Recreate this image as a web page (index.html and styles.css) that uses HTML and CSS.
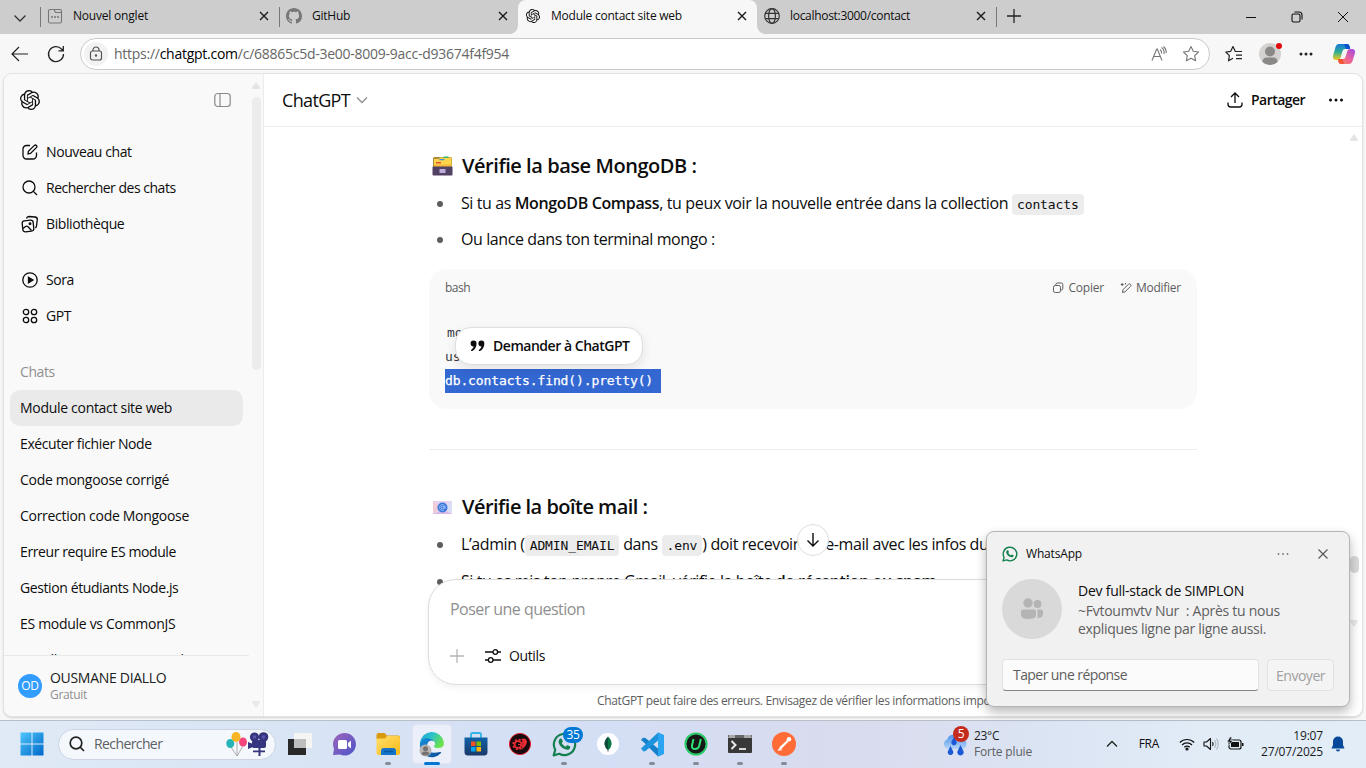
FILE: index.html
```html
<!DOCTYPE html>
<html lang="fr">
<head>
<meta charset="utf-8">
<title>Module contact site web</title>
<link rel="stylesheet" href="styles.css">
</head>
<body>
<svg width="0" height="0" class="defs">
  <defs>
    <symbol id="openai" viewBox="0 0 24 24"><path d="M22.2819 9.8211a5.9847 5.9847 0 0 0-.5157-4.9108 6.0462 6.0462 0 0 0-6.5098-2.9A6.0651 6.0651 0 0 0 4.9807 4.1818a5.9847 5.9847 0 0 0-3.9977 2.9 6.0462 6.0462 0 0 0 .7427 7.0966 5.98 5.98 0 0 0 .511 4.9107 6.051 6.051 0 0 0 6.5146 2.9001A5.9847 5.9847 0 0 0 13.2599 24a6.0557 6.0557 0 0 0 5.7718-4.2058 5.9894 5.9894 0 0 0 3.9977-2.9001 6.0557 6.0557 0 0 0-.7475-7.0729zm-9.022 12.6081a4.4755 4.4755 0 0 1-2.8764-1.0408l.1419-.0804 4.7783-2.7582a.7948.7948 0 0 0 .3927-.6813v-6.7369l2.02 1.1686a.071.071 0 0 1 .038.052v5.5826a4.504 4.504 0 0 1-4.4945 4.4944zm-9.6607-4.1254a4.4708 4.4708 0 0 1-.5346-3.0137l.142.0852 4.783 2.7582a.7712.7712 0 0 0 .7806 0l5.8428-3.3685v2.3324a.0804.0804 0 0 1-.0332.0615L9.74 19.9502a4.4992 4.4992 0 0 1-6.1408-1.6464zM2.3408 7.8956a4.485 4.485 0 0 1 2.3655-1.9728V11.6a.7664.7664 0 0 0 .3879.6765l5.8144 3.3543-2.0201 1.1685a.0757.0757 0 0 1-.071 0l-4.8303-2.7865A4.504 4.504 0 0 1 2.3408 7.872zm16.5963 3.8558L13.1038 8.364 15.1192 7.2a.0757.0757 0 0 1 .071 0l4.8303 2.7913a4.4944 4.4944 0 0 1-.6765 8.1042v-5.6772a.79.79 0 0 0-.407-.667zm2.0107-3.0231l-.142-.0852-4.7735-2.7818a.7759.7759 0 0 0-.7854 0L9.409 9.2297V6.8974a.0662.0662 0 0 1 .0284-.0615l4.8303-2.7866a4.4992 4.4992 0 0 1 6.6802 4.66zM8.3065 12.863l-2.02-1.1638a.0804.0804 0 0 1-.038-.0567V6.0742a4.4992 4.4992 0 0 1 7.3757-3.4537l-.142.0805L8.704 5.459a.7948.7948 0 0 0-.3927.6813zm1.0976-2.3654l2.602-1.4998 2.6069 1.4998v2.9994l-2.5974 1.4997-2.6067-1.4997Z" fill="currentColor"/></symbol>
    <symbol id="close" viewBox="0 0 16 16"><path d="M4 4l8 8M12 4l-8 8" fill="none" stroke="#1a1a1a" stroke-width="1.4"/></symbol>
    <symbol id="whatsapp" viewBox="0 0 24 24"><path d="M1.6 22.4l1.5-5.4A10.2 10.2 0 1 1 7 20.9z" fill="none" stroke="#15804f" stroke-width="2.1" stroke-linejoin="round"/><path d="M8.2 6.3c.5-.2 1.100 0 1.300.5l.8 1.900c.1.400 0 .7-.2 1l-.7.800c.8 1.600 2 2.700 3.800 3.600l1-1.100c.3-.3.600-.4 1-.2l1.800.900c.5.200.6.600.5 1.100-.3 1.500-1.700 2.300-3 2.200-4.200-.5-7.500-3.700-8.200-7.300-.1-1.400.7-2.900 1.900-3.400z" fill="#15804f"/></symbol>
    <linearGradient id="win" x1="0" y1="0" x2="1" y2="1"><stop offset="0" stop-color="#4cc6fb"/><stop offset="1" stop-color="#0067c9"/></linearGradient>
    <linearGradient id="chatg" x1="0" y1="0" x2="1" y2="1"><stop offset="0" stop-color="#a063ba"/><stop offset="1" stop-color="#4a55c9"/></linearGradient>
    <linearGradient id="fold" x1="0" y1="0" x2="1" y2="1"><stop offset="0" stop-color="#ffdf6a"/><stop offset="1" stop-color="#fbb918"/></linearGradient>
    <linearGradient id="edge1" x1="0" y1="0" x2="1" y2=".5"><stop offset="0" stop-color="#1a9fd9"/><stop offset=".5" stop-color="#2cc3c9"/><stop offset="1" stop-color="#6be34c"/></linearGradient>
    <linearGradient id="edge2" x1="0" y1="0" x2="1" y2="1"><stop offset="0" stop-color="#1690df"/><stop offset="1" stop-color="#0b4c94"/></linearGradient>
    <linearGradient id="store" x1="0" y1="0" x2="0" y2="1"><stop offset="0" stop-color="#0f62a8"/><stop offset="1" stop-color="#1b3868"/></linearGradient>
    <linearGradient id="cop1" x1="0" y1="0" x2="0" y2="1"><stop offset="0" stop-color="#1677e0"/><stop offset=".5" stop-color="#30ae92"/><stop offset="1" stop-color="#f4cc1c"/></linearGradient>
    <linearGradient id="cop2" x1="1" y1="0" x2="0" y2="1"><stop offset="0" stop-color="#a14ae8"/><stop offset=".55" stop-color="#ef6695"/><stop offset="1" stop-color="#fb8a4b"/></linearGradient>
    <linearGradient id="cloud" x1="0" y1="0" x2="0" y2="1"><stop offset="0" stop-color="#4d90e8"/><stop offset="1" stop-color="#b5d5fa"/></linearGradient>
  </defs>
</svg>

<header class="tabstrip">
  <div class="tab-menu"><svg width="14" height="14"><path d="M1.500 4.500l5.500 5.500 5.500-5.500" fill="none" stroke="#333" stroke-width="1.300"/></svg></div>
  <div class="tab first">
    <svg width="16" height="16" fill="none" stroke="#777" stroke-width="1.100"><path d="M1.500 4v9.500a1.500 1.500 0 0 0 1.500 1.500h10a1.500 1.500 0 0 0 1.500-1.500V4.500H8.500L7 1.500H3A1.500 1.500 0 0 0 1.500 3zM7 1.500h6a1.500 1.500 0 0 1 1.500 1.500v1.500"/><path d="M4 9h2M7 9h2M10 9h2" stroke-width="1.600"/></svg>
    <span class="t1">Nouvel onglet</span><svg class="x" width="16" height="16"><use href="#close"/></svg>
  </div>
  <div class="tab sep">
    <svg width="16" height="16" viewBox="0 0 16 16"><path fill="#777" d="M8 0C3.58 0 0 3.58 0 8c0 3.54 2.290 6.530 5.470 7.590.4.070.550-.170.550-.380 0-.190-.010-.820-.010-1.490-2.010.370-2.530-.490-2.690-.940-.090-.230-.480-.940-.820-1.130-.280-.150-.680-.520-.010-.530.630-.010 1.080.580 1.230.820.720 1.210 1.870.870 2.330.660.070-.520.280-.870.510-1.070-1.780-.2-3.640-.890-3.640-3.950 0-.870.310-1.590.820-2.150-.080-.2-.360-1.020.080-2.120 0 0 .670-.210 2.200.820.640-.180 1.320-.270 2-.270s1.360.090 2 .270c1.530-1.040 2.200-.820 2.200-.820.440 1.100.160 1.920.080 2.120.510.560.820 1.270.820 2.150 0 3.070-1.870 3.750-3.650 3.950.290.250.540.730.540 1.480 0 1.070-.010 1.930-.010 2.200 0 .210.150.460.550.380A8.010 8.010 0 0 0 16 8c0-4.420-3.580-8-8-8z"/></svg>
    <span class="t2">GitHub</span><svg class="x" width="16" height="16"><use href="#close"/></svg>
  </div>
  <div class="tab active">
    <svg width="16" height="16" class="ai"><use href="#openai"/></svg>
    <span class="t3">Module contact site web</span><svg class="x" width="16" height="16"><use href="#close"/></svg>
  </div>
  <div class="tab">
    <svg width="16" height="16" fill="none" stroke="#333" stroke-width="1.200"><circle cx="8" cy="8" r="7.300"/><ellipse cx="8" cy="8" rx="3.400" ry="7.300"/><path d="M1.500 5.300h13M1.500 10.700h13"/></svg>
    <span class="t4">localhost:3000/contact</span><svg class="x" width="16" height="16"><use href="#close"/></svg>
  </div>
  <div class="tab-new"><svg width="14" height="14"><path d="M7 0v14M0 7h14" stroke="#222" stroke-width="1.300"/></svg></div>
  <div class="win-btns">
    <svg width="12" height="12"><path d="M1 6.500h10" stroke="#111"/></svg>
    <svg width="12" height="12" fill="none" stroke="#111" stroke-width="1.100"><rect x="1" y="3" width="8" height="8" rx="1.500"/><path d="M3.500 1h4.500a3 3 0 0 1 3 3v4.500"/></svg>
    <svg width="12" height="12"><path d="M1 1l10 10M11 1L1 11" stroke="#111"/></svg>
  </div>
</header>

<div class="toolbar">
  <svg class="back" width="18" height="16" fill="none" stroke="#222" stroke-width="1.200"><path d="M17 8H1M8 1L1 8l7 7"/></svg>
  <svg class="reload" width="18" height="18" fill="none" stroke="#222" stroke-width="1.300"><path d="M16.500 9A7.500 7.500 0 1 1 14.500 4L16 5.500M16.300 1v4.800h-4.800"/></svg>
  <div class="omnibox">
    <div class="lock"><svg width="14" height="16" fill="none" stroke="#555" stroke-width="1.200"><rect x="1.500" y="5" width="11" height="9" rx="2"/><path d="M4 5V4a3 3 0 0 1 6 0v1"/><circle cx="7" cy="9.500" r=".6" fill="#555"/></svg></div>
    <div class="url">https://<b>chatgpt.com</b>/c/68865c5d-3e00-8009-9acc-d93674f4f954</div>
    <svg width="16" height="16" fill="none" stroke="#777" stroke-width="1.100"><path d="M1 14.500L5.700 3h.6L11 14.500M2.800 10.500h6.500M9 3.500q2 1.500 1.500 4M10.500 1.500q3.300 2.200 2.500 6.500M12.500.5q3 2.500 2.700 6.500"/></svg>
    <svg width="18" height="18" fill="none" stroke="#777" stroke-width="1.100"><path d="M9 1.500l2.300 4.800 5.200.7-3.800 3.600.9 5.200L9 13.300l-4.600 2.500.9-5.200L1.500 7l5.200-.7z" stroke-linejoin="round"/></svg>
  </div>
  <div class="tools">
    <svg width="18" height="18" fill="none" stroke="#222" stroke-width="1.200"><path d="M17 6.500H10.300L8 1.500 5.700 6.300.8 7l3.600 3.600-.9 5.200L8 13.300M11 10.200h6M11 13.600h6" stroke-linejoin="round"/></svg>
    <svg width="24" height="24"><circle cx="12" cy="12" r="11" fill="#d4d2d0"/><circle cx="12" cy="9.500" r="5" fill="#8a8886"/><path d="M4.500 20q0-4.500 4-4.500h7q4 0 4 4.500a11 11 0 0 1-15 0z" fill="#8a8886"/><circle cx="21" cy="4" r="3" fill="#e00b0b"/></svg>
    <svg width="16" height="4" fill="#222"><circle cx="3" cy="2" r="1.500"/><circle cx="8" cy="2" r="1.500"/><circle cx="13" cy="2" r="1.500"/></svg>
    <svg width="24" height="22" viewBox="0 0 24 22"><path d="M7 1h8q2 0 2.500 2l.5 3H13q-2 0-2.500 2L8.500 15q-.5 2-2.500 2H4Q.5 17 1 13L3.500 4Q4.500 1 7 1z" fill="url(#cop1)"/><path d="M12 1h3q2 0 2.500 2l.7 3H14z" fill="#0b53ce"/><path d="M17 21H9q-2 0-2.500-2L6 16h5q2 0 2.500-2l2-6.500q.5-1.500 2.500-1.500h2q3.500 0 3 4l-2.500 8q-1 3-3.500 3z" fill="url(#cop2)"/><path d="M12 21H9q-2 0-2.500-2L6 16h5z" fill="#f2553c"/></svg>
  </div>
</div>

<div class="page">
  <aside class="sidebar">
    <div class="side-col">
      <div class="side-head"><svg width="20" height="20" class="ai"><use href="#openai"/></svg><svg width="17" height="16" fill="none" stroke="#8a8a8a" stroke-width="1.200"><rect x=".8" y="1.500" width="15.400" height="13" rx="3"/><path d="M6 1.500v13"/></svg></div>
      <nav class="nav">
        <a><svg width="16" height="16" viewBox="0 0 16 16"><path d="M8 1.500H4.500a3.500 3.500 0 0 0-3.500 3.500v6.500A3.500 3.500 0 0 0 4.500 15H11a3.500 3.500 0 0 0 3.500-3.500V8.500M6 10l.4-2.600 6-6q1-.8 2 0t.2 2L8.500 9.500z"/></svg><span class="n1">Nouveau chat</span></a>
        <a><svg width="16" height="16" viewBox="0 0 16 16"><circle cx="7" cy="7" r="6"/><path d="M11.400 11.400L15 15"/></svg><span class="n2">Rechercher des chats</span></a>
        <a><svg width="18" height="18" viewBox="0 0 18 18"><rect x="1.500" y="5.500" width="11" height="11" rx="2.500" transform="rotate(-6 7 11)"/><path d="M5.500 3.500q.4-2 2.500-2l6 .5q2.500.3 2.300 2.800l-.8 6q-.2 1.700-1.300 2M2 13.500l2.500-2q1.200-.8 2.300 0l3.700 4"/><circle cx="9" cy="8.800" r=".8" fill="#0d0d0d"/></svg><span class="n3">Bibliothèque</span></a>
      </nav>
      <nav class="nav two">
        <a><svg width="16" height="16" viewBox="0 0 16 16"><circle cx="8" cy="8" r="7.200"/><path d="M6.500 5.200L11 8l-4.500 2.800z" fill="#0d0d0d"/></svg><span class="n4">Sora</span></a>
        <a><svg width="16" height="16" viewBox="0 0 16 16"><circle cx="4" cy="4" r="2.700"/><circle cx="12" cy="4" r="2.700"/><circle cx="4" cy="12" r="2.700"/><circle cx="12" cy="12" r="2.700"/></svg><span class="n4">GPT</span></a>
      </nav>
      <div class="chats">
        <div class="label">Chats</div>
        <div class="chat wide sel">Module contact site web</div>
        <div class="chat">Exécuter fichier Node</div>
        <div class="chat wide">Code mongoose corrigé</div>
        <div class="chat wide">Correction code Mongoose</div>
        <div class="chat">Erreur require ES module</div>
        <div class="chat">Gestion étudiants Node.js</div>
        <div class="chat wide">ES module vs CommonJS</div>
        <div class="chat wide">Installer mongoose USB ok</div>
      </div>
      <div class="profile"><div class="od">OD</div><div><div class="pname">OUSMANE DIALLO</div><div class="plan">Gratuit</div></div></div>
    </div>
    <div class="side-scroll"><i class="up"></i><i class="thumb"></i><i class="down"></i></div>
  </aside>

  <main class="main">
    <div class="main-head">
      <div class="model">ChatGPT</div>
      <svg width="12" height="12"><path d="M1 3.500l5 5 5-5" fill="none" stroke="#8f8f8f" stroke-width="1.300"/></svg>
      <svg class="share" width="16" height="16" fill="none" stroke="#0d0d0d" stroke-width="1.300"><path d="M8 11V1.500M4 5l4-4 4 4M1 10.500v1.800A2.700 2.700 0 0 0 3.700 15h8.600a2.700 2.700 0 0 0 2.700-2.700v-1.800"/></svg>
      <div class="share-label">Partager</div>
      <svg width="16" height="4" fill="#0d0d0d"><circle cx="2.500" cy="2" r="1.500"/><circle cx="8" cy="2" r="1.500"/><circle cx="13.500" cy="2" r="1.500"/></svg>
    </div>
    <div class="body">
      <div class="left">
        <article class="thread">
          <h3><svg width="21" height="20"><rect x="1" y="1" width="19" height="17" rx="1.500" fill="#b08a3a"/><path d="M2 3h5l1-1.500h11.500V11H2z" fill="#fcd54a"/><path d="M11.500.5h5v1.500h-5z" fill="#35b46a"/><path d="M7.500 3h5v1.300h-5z" fill="#3e8fd6"/><path d="M4 6h5v1.500H4z" fill="#e7503c"/><path d="M2 8.500h17V11H2z" fill="#f7b93c"/><rect x=".5" y="10.500" width="20" height="9" rx="1" fill="#514263"/><rect x="7.500" y="13" width="6" height="4" fill="#bfaedb"/></svg><span class="h1">Vérifie la base MongoDB :</span></h3>
          <ul>
            <li>Si tu as <b>MongoDB Compass</b><span class="l1">, tu peux voir la nouvelle entrée dans la collection </span><code>contacts</code></li>
            <li><span class="l2">Ou lance dans ton terminal mongo :</span></li>
          </ul>
          <div class="code">
            <div class="code-head"><span class="lang">bash</span>
              <span class="act"><svg width="12" height="12" fill="none" stroke="#5d5d5d" stroke-width="1"><rect x="1.500" y="3.500" width="7" height="7" rx="1.800"/><path d="M3.800 3.300V2.500A1.500 1.500 0 0 1 5.300 1h4A1.500 1.500 0 0 1 10.800 2.500V6.500A1.500 1.500 0 0 1 9.300 8H8.700"/></svg><span class="cop">Copier</span></span>
              <span class="act"><svg width="12" height="12" fill="none" stroke="#5d5d5d" stroke-width="1"><path d="M2.500 10.500l.5-2.800 5.500-5.500q1-.8 2 .1t.1 2L5 9.800zM2.200 1v3M.7 2.500h3M5.500 1v1.500"/></svg><span class="mod">Modifier</span></span>
            </div>
            <pre><span class="m1">mongo</span>
use test
<span class="selection">db.contacts.find().pretty() </span></pre>
            <button class="ask"><svg width="15" height="12" viewBox="0 0 15 12" fill="#0d0d0d"><path d="M3.500.5a3 3 0 0 1 3 3.200c0 4-2.500 6.500-4.500 7.300q-1 .3-1-.6 0-.4.600-.8Q3.500 8 3.700 6.500A3 3 0 1 1 3.500.5z"/><path d="M11.300.5a3 3 0 0 1 3 3.200c0 4-2.500 6.500-4.500 7.300q-1 .3-1-.6 0-.4.600-.8Q11.300 8 11.500 6.500A3 3 0 1 1 11.300.5z"/></svg><span>Demander à ChatGPT</span></button>
          </div>
          <hr>
          <h3><svg width="21" height="20"><rect x="1" y="4" width="19" height="13" fill="#e6d3ef"/><path d="M1 4l8 6.500L1 17z" fill="#f0cbd8"/><path d="M20 4l-8 6.500 8 6.500z" fill="#d9def5"/><path d="M1 17l9.500-4 9.500 4z" fill="#dcb8e6"/><circle cx="10.500" cy="10.500" r="5" fill="#3b78dd"/><circle cx="10.500" cy="10.500" r="1.500" fill="none" stroke="#b9d4ff" stroke-width=".8"/><path d="M12 9v2q.5 1 1.300.2V10A3 3 0 1 0 12 13" fill="none" stroke="#b9d4ff" stroke-width=".6"/></svg><span class="h2">Vérifie la boîte mail :</span></h3>
          <ul class="mail">
            <li>L’admin (<code>ADMIN_EMAIL</code> dans <code>.env</code>) doit recevoir un e-mail avec les infos du formulaire</li>
            <li>Si tu as mis ton propre Gmail, vérifie la boîte <b>de réception ou spam</b></li>
          </ul>
          <button class="jump"><svg width="14" height="16"><path d="M7 1v13M1.500 8.500L7 14l5.500-5.500" fill="none" stroke="#0d0d0d" stroke-width="1.400"/></svg></button>
        </article>
        <div class="composer">
          <div class="ph">Poser une question</div>
          <div class="crow"><svg width="14" height="14"><path d="M7 0v14M0 7h14" stroke="#b5b5b5" stroke-width="1.300"/></svg>
            <svg width="16" height="16" fill="none" stroke="#0d0d0d" stroke-width="1.300"><path d="M0 4h8M12.500 4H16M0 12h3.500M8 12h8"/><circle cx="10.300" cy="4" r="2.300"/><circle cx="5.700" cy="12" r="2.300"/></svg><span>Outils</span></div>
        </div>
        <div class="note">ChatGPT peut faire des erreurs. Envisagez de vérifier les informations importantes.</div>
      </div>
      <div class="main-scroll"><i class="up"></i><i class="thumb"></i><i class="down"></i></div>
    </div>
  </main>
</div>

<footer class="taskbar">
  <div class="app start"><svg width="24" height="24" fill="url(#win)"><path d="M.5.500h11v11H.5zM12.500.5h11v11h-11zM.5 12.500h11v11H.5zM12.500 12.500h11v11h-11z"/></svg></div>
  <div class="search"><svg width="16" height="16" fill="none" stroke="#222" stroke-width="1.700"><circle cx="7" cy="7" r="5.800"/><path d="M11 11l4 4"/></svg><span>Rechercher</span>
    <svg width="44" height="26"><path d="M5 16l6 9M11 11v14M17 15l-6 10" stroke="#999" stroke-width=".8" fill="none"/><ellipse cx="4.300" cy="12.500" rx="4" ry="4.500" fill="#25b5b9"/><ellipse cx="17" cy="11" rx="4" ry="4.500" fill="#f5457a"/><ellipse cx="10" cy="6" rx="4.500" ry="5" fill="#f9b526"/><g fill="#35347e"><circle cx="28.500" cy="6" r="4.600"/><circle cx="37.500" cy="6" r="4.800"/><rect x="26" y="9" width="14" height="8" rx="2"/><path d="M22 11l5 2v3l-5 2zM32.500 17h2v8h-2zM27 19.500h12v1.800H27z"/></g><circle cx="28.500" cy="6" r="1.800" fill="#5956ac"/><circle cx="37.500" cy="6" r="1.800" fill="#5956ac"/></svg>
  </div>
  <div class="app"><svg width="24" height="24"><path d="M6 1h18v15H6z" fill="#f5f5f4"/><path d="M0 7h18v16H0z" fill="#292929"/><path d="M6 7h12v9H6z" fill="#bebebe"/></svg></div>
  <div class="app"><svg width="24" height="24"><path d="M12 1a11.300 11.300 0 1 1-4 21.600L1 23l1-6A11.300 11.300 0 0 1 12 1z" fill="url(#chatg)"/><rect x="6" y="8" width="9" height="9" rx="1.500" fill="#fff"/><path d="M16 11l3-2.500v8L16 14z" fill="#fff"/></svg></div>
  <div class="app run"><svg width="25" height="24"><path d="M.5 3q0-2 2-2h6l2.500 2.500H22q2 0 2 2V8H.5z" fill="#d99a0e"/><path d="M.5 6.500H9L11 4h11q2 0 2 2v15q0 2-2 2H2.500q-2 0-2-2z" fill="url(#fold)"/><path d="M5 23v-4q0-3 3-3h9q3 0 3 3v4z" fill="#1374ca"/><path d="M8 19.500h9" stroke="#0b559d" stroke-width="1.500"/></svg></div>
  <div class="app cur"><svg width="26" height="26"><path d="M1 12A12 12 0 0 1 24.800 11q.8 6-5.800 6-4 0-4-2 1.500-1.200 1-3-.7-3-4-3-5 0-5 6-4-1-6-3z" fill="url(#edge1)"/><path d="M1 12Q3.500 6 10 7.500q4.500 1 6 4-1-2-4-2-4 1-4 6 1 8.500 13 5.500 2 0 .7 1.200A12 12 0 0 1 1 12z" fill="url(#edge2)"/><circle cx="6.500" cy="19.500" r="6" fill="#b8b6b4"/><circle cx="6.500" cy="17.800" r="2.500" fill="#74716f"/><path d="M2.500 23q0-2.500 4-2.500t4 2.500a6 6 0 0 1-8 0z" fill="#74716f"/></svg></div>
  <div class="app"><svg width="24" height="24"><path d="M7 6V2.500Q7 1 8.500 1h7Q17 1 17 2.500V6" fill="none" stroke="#32b4e8" stroke-width="1.800"/><path d="M.5 5.500h23V20q0 3.500-3.500 3.500H4Q.5 23.500.5 20z" fill="url(#store)"/><path d="M7 9.500h4.500V14H7z" fill="#f25022"/><path d="M12.500 9.500H17V14h-4.500z" fill="#7fba00"/><path d="M7 15h4.500v4.500H7z" fill="#00a4ef"/><path d="M12.500 15H17v4.500h-4.500z" fill="#ffb900"/></svg></div>
  <div class="app"><svg width="24" height="24"><circle cx="12" cy="12" r="10.600" fill="#150b0d" stroke="#e2202b"/><circle cx="10" cy="12.500" r="3.400" fill="none" stroke="#ed2b35" stroke-width="1.800"/><circle cx="10" cy="12.500" r="4.900" fill="none" stroke="#ed2b35" stroke-width="1.600" stroke-dasharray="2.200 1.650"/><path d="M10 12.500h3" stroke="#ed2b35"/><path d="M13 7q5.500-2 6 3Q18.500 14 13 18l2-5q1-3-2-6z" fill="#ed2b35"/></svg></div>
  <div class="app run"><svg width="25" height="25"><use href="#whatsapp"/></svg><span class="badge">35</span></div>
  <div class="app"><svg width="24" height="24"><circle cx="12" cy="12" r="11" fill="#fff"/><path d="M12 4.500q4 4 3.500 8Q15 16 12 18.500z" fill="#0b7546"/><path d="M12 4.500q-4 4-3.500 8Q9 16 12 18.500z" fill="#0d4b3b"/><path d="M12 17v3" stroke="#777" stroke-width=".8"/></svg></div>
  <div class="app run"><svg width="25" height="25"><path d="M18 .5l6 2.800v18.400l-6 2.800L3 9.500 1 8l2-2.300L5.500 6 18 16.500z" fill="#1580cc"/><path d="M18 .5L1 16.500 3.500 19.500 5.500 19 18 8.500z" fill="#1c93dc"/><path d="M18 .5l6 2.800v18.400l-6 2.800z" fill="#2aa5f2"/></svg></div>
  <div class="app run"><svg width="24" height="24"><circle cx="12" cy="12" r="10.500" fill="#161717" stroke="#29c866" stroke-width="2"/><path d="M9.500 7L8 13.500Q7.500 17 11 17t4.300-3.500L16.800 7" fill="none" stroke="#2ee275" stroke-width="2"/></svg></div>
  <div class="app run"><svg width="24" height="24"><rect y="3" width="24" height="18" rx="1" fill="#383838"/><path d="M1 3h22l1 3H0z" fill="#a9a9a9"/><path d="M7 3h9v3H7z" fill="#666"/><path d="M3.500 9l4 4-4 4" fill="none" stroke="#e8e8e8" stroke-width="2"/><path d="M11 17h7" stroke="#fff" stroke-width="1.600"/></svg></div>
  <div class="app run"><svg width="24" height="24"><circle cx="12" cy="12" r="12" fill="#ff6c37"/><path d="M8.500 14.500l6.500-6 1.200 1.200-6 6zM6 18.500l2.500-4 1.700 1.200-2 2h2z" fill="#fff" stroke="#fff" stroke-width=".5"/><circle cx="17" cy="7.300" r="2.300" fill="#fff"/></svg></div>
  <div class="weather"><div class="wico"><svg width="26" height="26"><path d="M6 18a5 5 0 0 1-1-9.500A7.500 7.500 0 0 1 19 8a5 5 0 0 1 1 10z" fill="url(#cloud)"/><path d="M12 6l2.500 4.500a2.700 2.700 0 1 1-5 0zM8.500 15l2.500 5a2.800 2.800 0 1 1-5 0zM18.500 14l2.900 6a3.200 3.200 0 1 1-5.800 0z" fill="#1a58d8"/></svg><span class="badge red">5</span></div>
    <div class="wtxt"><div class="deg">23°C</div><div class="rain">Forte pluie</div></div></div>
  <svg class="chev" width="12" height="12"><path d="M1 8.500l5-5 5 5" fill="none" stroke="#222" stroke-width="1.300"/></svg>
  <div class="lang-ind">FRA</div>
  <svg class="wifi" width="16" height="14" fill="none" stroke="#111" stroke-width="1.200"><path d="M.8 5.500a10.200 10.200 0 0 1 14.400 0M3 8a7 7 0 0 1 10 0M5.300 10.300a4 4 0 0 1 5.400 0"/><circle cx="8" cy="12" r="1" fill="#111"/></svg>
  <svg class="vol" width="17" height="14" fill="none" stroke="#111" stroke-width="1.100"><path d="M1 5v4h2.500L7.500 12.500v-11L3.500 5z" stroke-linejoin="round"/><path d="M9.500 5q1.300 2 0 4"/><path d="M11.500 3q2.600 4 0 8M13.500 1.500q3.500 5.500 0 11" stroke="#aab2b8"/></svg>
  <svg class="bat" width="17" height="14"><rect x="2" y="3" width="12" height="9" rx="2" fill="none" stroke="#111" stroke-width="1.200"/><rect x="4" y="5" width="8" height="5" fill="#111"/><path d="M15 6h1.500v3H15z" fill="#111"/><path d="M3 0L0 5h2.500L1.500 8.500 6 3.500H3.500L5 0z" fill="#111" stroke="#e1ebf6" stroke-width=".6"/></svg>
  <div class="clock"><div class="time">19:07</div><div class="date">27/07/2025</div></div>
  <svg class="bell" width="14" height="16" fill="#07489a"><path d="M7 .5a5 5 0 0 1 5 5V9l1.500 3.500H.5L2 9V5.500a5 5 0 0 1 5-5zM5 13.500h4a2 2 0 0 1-4 0z"/></svg>
</footer>

<section class="toast">
  <div class="toast-head"><svg width="16" height="16"><use href="#whatsapp"/></svg><span class="wa">WhatsApp</span>
    <svg class="dots" width="12" height="4" fill="#777"><circle cx="1.500" cy="2" r=".9"/><circle cx="6" cy="2" r=".9"/><circle cx="10.500" cy="2" r=".9"/></svg>
    <svg width="10" height="10"><path d="M.5.500l9 9M9.500.5l-9 9" stroke="#555" stroke-width="1.100"/></svg></div>
  <div class="toast-body">
    <svg width="60" height="60"><circle cx="30" cy="30" r="30" fill="#d9d9d9"/><g fill="#b4b4b4"><circle cx="26" cy="24" r="4.700"/><circle cx="35.500" cy="25" r="3.900"/><path d="M21 30.500h11a2 2 0 0 1 2 2V36q0 4-7.500 4T19 36v-3.500a2 2 0 0 1 2-2zM35.500 30.500H39q2 0 2 2V35q0 4-5.500 4z"/></g></svg>
    <div><div class="who">Dev full-stack de SIMPLON</div><div class="msg"><span class="g1">~Fvtoumvtv Nur&nbsp; : Après tu nous</span><br><span class="g2">expliques ligne par ligne aussi.</span></div></div>
  </div>
  <div class="toast-foot"><div class="reply">Taper une réponse</div><div class="send">Envoyer</div></div>
</section>
</body>
</html>
```
FILE: styles.css
```css
* { box-sizing: border-box; }
body { margin: 0; width: 1366px; height: 768px; overflow: hidden; display: flex; flex-direction: column; position: relative; background: #f7f7f7; color: #0d0d0d; font: 14px/20px "Open Sans", "Noto Sans", sans-serif; white-space: nowrap; }
svg { flex: none; display: block; overflow: visible; }
.defs { position: absolute; }
button { font: inherit; color: inherit; padding: 0; background: #fff; }
.ai { color: #0d0d0d; }

/* tab strip */
.tabstrip { height: 34px; flex: none; background: #cdcdcd; display: flex; align-items: stretch; font-size: 12px; }
.tab-menu { width: 40px; display: flex; align-items: center; justify-content: center; padding-top: 1px; }
.tab { width: 239px; padding: 0 7px 2px; display: flex; align-items: center; gap: 10px; position: relative; }
.tab .x { margin-left: auto; }
.tab.first::before, .tab.sep::before, .tab-new::before { content: ""; position: absolute; left: 0; top: 7px; width: 1px; height: 20px; background: #777; }
.tab.active { background: #f7f7f7; border-radius: 8px 8px 0 0; }
.tab.active .ai { transform: scale(.88); }
.tab.active::before, .tab.active::after { content: ""; position: absolute; bottom: 0; width: 8px; height: 8px; }
.tab.active::before { left: -8px; background: radial-gradient(circle at 0 0, #cdcdcd 7.500px, #f7f7f7 8px); }
.tab.active::after { right: -8px; background: radial-gradient(circle at 8px 0, #cdcdcd 7.500px, #f7f7f7 8px); }
.t1 { letter-spacing: -.2px; } .t2, .t3 { letter-spacing: -.23px; } .t4 { letter-spacing: -.3px; }
.tab-new { width: 36px; padding-bottom: 3px; position: relative; display: flex; align-items: center; justify-content: center; }
.win-btns { margin-left: auto; padding-right: 17px; display: flex; align-items: center; gap: 34px; }

/* toolbar */
.toolbar { height: 39px; flex: none; display: flex; align-items: center; padding-left: 11px; }
.back { margin-right: 18px; }
.reload { margin-right: 15px; }
.omnibox { width: 1130px; height: 32px; margin-top: 1px; border: 1px solid #cacaca; border-radius: 16px; background: #fff; display: flex; align-items: center; padding: 0 9px 0 3px; }
.omnibox > svg:nth-of-type(1) { margin-right: 15px; }
.lock { width: 24px; height: 24px; border-radius: 12px; background: #f2f2f2; display: flex; align-items: center; justify-content: center; margin-right: 6px; padding-bottom: 1px; }
.url { flex: 1; color: #666; letter-spacing: -.26px; line-height: 20px; }
.url b { font-weight: 400; color: #000; }
.tools { flex: 1; display: flex; align-items: center; padding: 1px 0 0 15px; }
.tools svg:nth-child(2) { margin: 0 16px 0 15px; }
.tools svg:nth-child(4) { margin-left: 18px; }

/* page card */
.page { height: 644px; flex: none; margin: 0 3px; border: 1px solid #e3e3e3; border-radius: 9px; background: #fff; display: flex; overflow: hidden; box-shadow: 0 1px 2px rgba(0,0,0,.14); }
.sidebar { width: 260px; flex: none; background: #f9f9f9; border-right: 1px solid #ececec; display: flex; }
.side-col { width: 245px; display: flex; flex-direction: column; }
.side-head { height: 52px; flex: none; display: flex; justify-content: space-between; align-items: center; padding: 0 18px 0 16px; }
.nav { display: flex; flex-direction: column; padding-top: 8px; }
.nav.two { padding-top: 20px; }
.nav a { height: 36px; padding-left: 18px; display: flex; align-items: center; gap: 8px; }
.nav svg { fill: none; stroke: #0d0d0d; stroke-width: 1.300; }
.nav a svg[width="18"] { margin: 0 -1px; }
.n1 { letter-spacing: -.4px; } .n2 { letter-spacing: -.49px; } .n3, .n4 { letter-spacing: -.4px; }
.chats { flex: 1; min-height: 0; overflow: hidden; padding: 20px 6px 0 6px; }
.label, .chat { height: 36px; line-height: 36px; padding-left: 10px; letter-spacing: -.4px; }
.label { color: #8f8f8f; }
.chat.wide { letter-spacing: -.3px; }
.chat.sel { background: #eaeaea; border-radius: 10px; }
.profile { height: 61px; flex: none; border-top: 1px solid #e9e9e9; display: flex; gap: 8px; align-items: center; padding: 0 0 1px 14px; }
.od { width: 24px; height: 24px; border-radius: 50%; background: #339cff; color: #fff; font-size: 12px; line-height: 24px; text-align: center; letter-spacing: -.3px; }
.pname { letter-spacing: -.3px; line-height: 18px; color: #202020; }
.plan { font-size: 12px; line-height: 16px; color: #8f8f8f; letter-spacing: -.32px; }
.side-scroll { width: 14px; padding: 8px 2px; display: flex; flex-direction: column; align-items: center; }
.up { border: 5px solid transparent; border-top: 0; border-bottom: 7px solid #e4e4e4; border-radius: 3px; }
.down { border: 5px solid transparent; border-bottom: 0; border-top: 7px solid #e9e9e9; border-radius: 3px; margin-top: auto; }
.thumb { width: 9px; border-radius: 5px; background: #ececec; }
.side-scroll .thumb { height: 273px; margin-top: 8px; }

/* conversation */
.main { flex: 1; display: flex; flex-direction: column; }
.main-head { height: 53px; flex: none; border-bottom: 1px solid #ededed; display: flex; align-items: center; padding: 0 18px; }
.model { font-size: 18px; line-height: 28px; letter-spacing: -.66px; margin-right: 6px; }
.share { margin-left: auto; margin-right: 8px; }
.share-label { font-weight: 600; letter-spacing: -.54px; margin-right: 23px; }
.body { flex: 1; min-height: 0; display: flex; }
.left { flex: 1; display: flex; flex-direction: column; padding-left: 165px; }
.thread { height: 472px; flex: none; width: 768px; padding-top: 25px; overflow: hidden; position: relative; font-size: 16px; }
h3 { margin: 0; height: 28px; font-size: 20px; line-height: 28px; font-weight: 600; display: flex; align-items: center; gap: 9px; padding-left: 3px; }
.h1 { letter-spacing: -.45px; } .h2 { letter-spacing: -.52px; }
ul { list-style: none; margin: 10px 0 0; padding: 0; display: flex; flex-direction: column; gap: 8px; }
ul.mail { gap: 9px; }
li { height: 28px; line-height: 26px; padding-left: 32px; position: relative; letter-spacing: -.4px; }
li::before { content: ""; position: absolute; left: 8px; top: 11px; width: 6px; height: 6px; border-radius: 3px; background: #5d5d5d; }
li b { font-weight: 600; letter-spacing: -.35px; }
.l1 { letter-spacing: -.36px; }
code { background: #ececec; border-radius: 4px; padding: 3px 5px; font: 13px/16px "DejaVu Sans Mono", monospace; letter-spacing: -.12px; }
.code { height: 140px; margin-top: 15px; border-radius: 18px; background: #f9f9f9; position: relative; padding: 0 16px; }
.code-head { height: 36px; padding-top: 1px; display: flex; align-items: center; gap: 16px; font-size: 12px; color: #5d5d5d; }
.lang { margin-right: auto; letter-spacing: -.5px; }
.act { display: flex; align-items: center; gap: 4px; }
.cop { letter-spacing: -.2px; } .mod { letter-spacing: -.26px; }
pre { margin: 16px 0 0; font: 13px/24px "DejaVu Sans Mono", monospace; letter-spacing: -.12px; color: #383a42; }
.m1 { padding-left: 2px; }
.selection { display: inline-block; background: #3367d1; color: #fff; -webkit-text-stroke: .25px #fff; }
.ask { position: absolute; left: 26px; top: 58px; width: 188px; height: 38px; border: 1px solid #dedede; border-radius: 16px; display: flex; align-items: center; gap: 8px; padding: 0 0 1px 14px; font-size: 14px; font-weight: 600; letter-spacing: -.47px; box-shadow: 0 4px 12px rgba(0,0,0,.09); }
hr { margin: 40px 0 43px; border: 0; border-top: 1px solid #ededed; }
.jump { position: absolute; left: 368px; top: 397px; width: 32px; height: 32px; border: 1px solid #dedede; border-radius: 16px; display: flex; align-items: center; justify-content: center; }
.composer { width: 769px; height: 106px; flex: none; margin: -20px 0 0 -1px; border: 1px solid #dcdcdc; border-radius: 28px; background: #fff; position: relative; padding: 17px 21px; box-shadow: 0 3px 7px rgba(0,0,0,.05); }
.ph { font-size: 16px; line-height: 24px; color: #8f8f8f; letter-spacing: -.54px; }
.crow { display: flex; align-items: center; height: 36px; margin-top: 17px; letter-spacing: -.37px; }
.crow svg:first-child { margin-right: 21px; }
.crow span { margin-left: 8px; }
.note { width: 768px; font-size: 12px; line-height: 16px; color: #5d5d5d; padding: 8px 0 0 168px; letter-spacing: -.34px; }
.main-scroll { width: 17px; flex: none; padding: 7px 0 0 1px; display: flex; flex-direction: column; align-items: center; }
.main-scroll .thumb { height: 17px; margin-top: 415px; background: #d9d9d9; }
.main-scroll .down { margin-top: 47px; }

/* taskbar */
.taskbar { height: 48px; flex: none; margin-top: 3px; border-top: 1px solid #b9bfc9; background: linear-gradient(90deg, #e0eaf6 0, #d9e4f5 20%, #d4def4 45%, #d9dbee 62%, #dbe4f3 76%, #e1ecf7 88%, #e2edf8 100%); display: flex; align-items: center; padding: 0 0 1px 10px; }
.app { width: 44px; height: 46px; flex: none; display: flex; align-items: center; justify-content: center; position: relative; }
.app.start { margin-right: 4px; }
.app.run::after, .app.cur::after { content: ""; position: absolute; left: 19px; bottom: 2px; width: 6px; height: 3px; border-radius: 2px; background: #858b96; }
.app.cur::before { content: ""; position: absolute; left: 3px; top: 4px; width: 38px; height: 38px; border-radius: 4px; background: #ebeff9; box-shadow: 0 0 0 1px #e0e5f1; }
.app.cur svg { position: relative; }
.app.cur::after { left: 14px; width: 16px; background: #0078d4; }
.search { width: 218px; height: 31px; margin-right: 2px; border-radius: 16px; background: #f4f8fc; border: 1px solid #ccd5e1; display: flex; align-items: center; padding: 0 5px 0 10px; }
.search span { margin: 0 auto 0 9px; color: #5c5f63; letter-spacing: -.6px; }
.badge { position: absolute; left: 21px; top: 6px; width: 20px; height: 16px; border-radius: 8px; background: #0078d4; color: #fff; font-size: 12px; letter-spacing: -.3px; line-height: 16px; text-align: center; }
.badge.red { background: #c42b1c; width: 16px; left: 11px; top: -5px; }
.weather { display: flex; align-items: center; gap: 6px; margin-left: 136px; }
.wico { position: relative; }
.wtxt, .clock { font-size: 12px; line-height: 16px; color: #1b1b1b; }
.rain { color: #5c5f63; letter-spacing: -.18px; }
.deg { letter-spacing: -.3px; }
.chev { margin-left: auto; margin-right: 21px; }
.lang-ind { font-size: 12px; margin-right: 20px; letter-spacing: -.3px; }
.wifi { margin-right: 8px; }
.vol { margin-right: 7px; }
.clock { width: 79px; text-align: right; letter-spacing: -.17px; }
.bell { margin: 0 21px 0 8px; }

/* notification */
.toast { position: absolute; left: 986px; top: 531px; width: 364px; height: 176px; border: 1px solid #b4b4b4; border-radius: 8px; background: #f1f1f1; padding: 0 15px; box-shadow: 0 5px 11px rgba(0,0,0,.28); }
.toast-head { height: 44px; display: flex; align-items: center; font-size: 12px; }
.wa { margin-left: 8px; letter-spacing: -.17px; }
.dots { margin-left: auto; margin-right: 29px; }
.toast-head > svg:last-child { margin-right: 6px; }
.toast-body { display: flex; gap: 16px; margin-top: 3px; }
.who { line-height: 20px; margin-top: 2px; letter-spacing: -.24px; }
.msg { line-height: 18px; margin-top: 1px; color: #5f5f5f; }
.g1 { letter-spacing: -.26px; } .g2 { letter-spacing: -.32px; }
.toast-foot { display: flex; gap: 8px; margin-top: 20px; }
.reply { width: 257px; height: 32px; background: #fbfbfb; border: 1px solid #e1e1e1; border-bottom-color: #828282; border-radius: 4px; padding-left: 10px; line-height: 30px; color: #5e5e5e; letter-spacing: -.57px; }
.send { width: 67px; height: 32px; background: #f4f4f4; border: 1px solid #e2e2e2; border-radius: 4px; text-align: center; line-height: 31px; color: #a0a0a0; letter-spacing: -.48px; }
```
